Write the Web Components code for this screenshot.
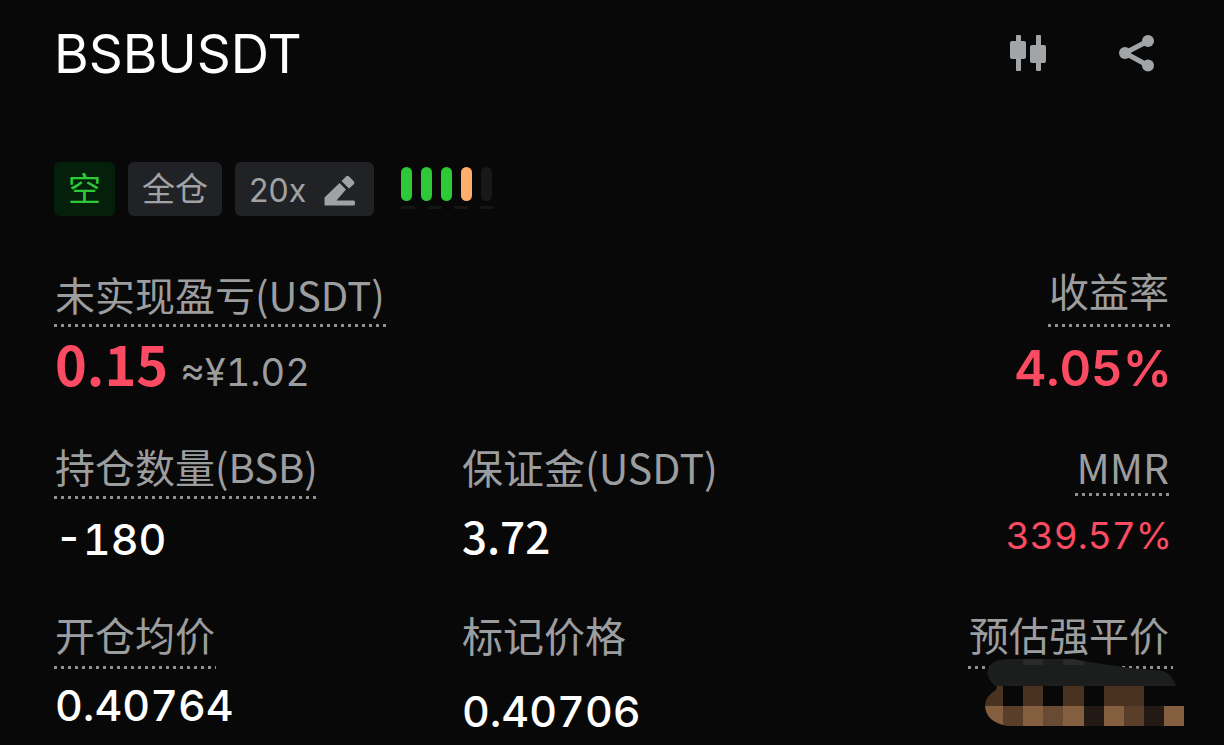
<!DOCTYPE html>
<html lang="zh-CN">
<head>
<meta charset="utf-8">
<title>BSBUSDT</title>
<meta name="viewport" content="width=device-width, initial-scale=1">
<style>
  body {
    margin: 0;
    background: #080808;
    color: #fff;
    font-family: 'Noto Sans CJK SC', 'Noto Sans', sans-serif;
  }
</style>
</head>
<body>
<position-card symbol="BSBUSDT"></position-card>

<script>
(function() {
  function define(name, html, setup) {
    var template = document.createElement('template')
    template.innerHTML = html
    customElements.define(name, class extends HTMLElement {
      constructor() {
        super()
        this.attachShadow({ mode: 'open' })
        this.shadowRoot.appendChild(template.content.cloneNode(true))
      }

      connectedCallback() {
        if (setup) setup(this, this.shadowRoot)
      }
    })
  }

  define('icon-button', `
    <style>
      :host { display: inline-flex; }
      button {
        display: flex;
        padding: 0;
        border: 0;
        background: none;
        color: #a2a5a8;
        cursor: pointer;
      }
    </style>
    <button type="button"><slot></slot></button>
  `, function(host, root) {
    root.querySelector('button').setAttribute('aria-label', host.getAttribute('label'))
  })

  define('position-tag', `
    <style>
      :host {
        display: flex;
        align-items: flex-start;
        box-sizing: border-box;
        height: 54px;
        padding: 0 14px;
        border-radius: 6px;
        background: #202225;
        color: #a0a2a5;
        font-size: 33px;
        line-height: 50px;
      }
      :host([side='short']) {
        background: #04200a;
        color: #2dc937;
      }
    </style>
    <slot></slot>
  `)

  define('leverage-button', `
    <style>
      :host { display: flex; }
      button {
        display: flex;
        align-items: center;
        gap: 18px;
        box-sizing: border-box;
        height: 54px;
        padding: 4px 18px 0 14px;
        border: 0;
        border-radius: 6px;
        background: #202225;
        color: #a0a2a5;
        font: 400 32px/50px Inter, sans-serif;
        cursor: pointer;
      }
      svg { display: block; }
    </style>
    <button type="button">
      <slot></slot>
      <svg width="32" height="32" viewBox="0 0 32 32" fill="currentColor" aria-hidden="true">
        <path d="M15.500 8L22 14.500L12.500 25.500H29.500Q31 25.500 31 27V29Q31 30.500 29.500 30.500H1.500Q.5 30.500 .5 29.500V22.500Z"/>
        <path d="M17.500 6L22 1.500Q23.500 0 25 1.500L29.800 6.300Q31.200 7.700 29.800 9.200L25 13.500Z"/>
      </svg>
    </button>
  `)

  define('risk-meter', `
    <style>
      :host { display: block; }
      .bars, .dashes { display: flex; }
      .bars { gap: 9px; }
      .bars i {
        width: 11px;
        height: 34px;
        border-radius: 6px;
        background: #171818;
      }
      .bars .low { background: #2dc937; }
      .bars .mid { background: #ffaf69; }
      .dashes {
        justify-content: space-between;
        margin: 5px -2px 0 0;
      }
      .dashes i { width: 14px; height: 3px; border-radius: 1px; background: #151515; }
    </style>
    <div class="bars">
      <i class="low"></i><i class="low"></i><i class="low"></i><i class="mid"></i><i></i>
    </div>
    <div class="dashes"><i></i><i></i><i></i><i></i></div>
  `)

  define('stat-item', `
    <style>
      :host {
        display: flex;
        flex-direction: column;
        align-items: flex-start;
      }
      :host([align='end']) { align-items: flex-end; }
      .label {
        box-sizing: border-box;
        height: var(--label-height, 55px);
        padding: 0 1px;
        color: #9c9d9f;
        font-size: var(--label-size, 40px);
        line-height: var(--label-line, 44px);
        white-space: nowrap;
      }
      :host([hint]) .label {
        background: repeating-linear-gradient(90deg, #8f9092 0 3px, transparent 3px 7px) left bottom / 100% 3px no-repeat;
      }
      :host([align='end']) .label { padding-right: 4px; }
      .value {
        display: flex;
        align-items: baseline;
        gap: 12px;
        height: 56px;
        margin-top: var(--value-gap, 12px);
        padding: 0 1px;
        font-family: var(--value-font, Inter, sans-serif);
        font-size: var(--value-size, 43px);
        font-weight: var(--value-weight, 500);
        font-feature-settings: 'tnum';
        line-height: 56px;
        white-space: nowrap;
      }
      :host([tone='loss']) .value { color: #fb4b62; }
    </style>
    <div class="label"></div>
    <div class="value"><slot></slot></div>
  `, function(host, root) {
    root.querySelector('.label').textContent = host.getAttribute('label')
  })

  // liquidation price is masked with a smear and a block mosaic
  define('masked-value', `
    <style>
      :host {
        display: block;
        position: relative;
        width: 182px;
        height: 56px;
      }
      svg {
        position: absolute;
        right: -13px;
        bottom: 7px;
      }
    </style>
    <svg width="200" height="68" viewBox="0 0 200 68" aria-hidden="true">
      <defs>
        <clipPath id="blob"><path d="M12 28L11 32Q0 38 0 48Q1 64 22 68H200V28Z"/></clipPath>
      </defs>
      <path fill="#1c1e1e" d="M10 28Q-1 18 4 9Q8 1 24 1H80Q92 1 104 4L145 10L178 13Q187 16 191 28Z"/>
      <path fill="#292a2b" d="M38 1H58V7H38ZM78 1H86Q92 1 99 4V7H78Z"/>
      <g clip-path="url(#blob)">
        <path fill="#493320" d="M0 28H18V48H0ZM38 28H58V48H38ZM78 28H99V48H78ZM119 28H159V48H119Z"/>
        <path fill="#835e3f" d="M0 48H18V68H0ZM38 48H58V68H38ZM78 48H99V68H78ZM119 48H139V68H119ZM179 48H199V68H179Z"/>
        <path fill="#593e29" d="M18 48H38V68H18ZM139 48H159V68H139Z"/>
        <path fill="#694a32" d="M58 48H78V68H58Z"/>
        <path fill="#241a15" d="M99 48H119V68H99ZM159 48H179V68H159Z"/>
      </g>
    </svg>
  `)

  define('position-card', `
    <style>
      :host {
        display: block;
        padding: 16px 51px 16px 54px;
      }
      header {
        display: flex;
        align-items: center;
        justify-content: space-between;
      }
      h1 {
        margin: 0;
        font: 400 53px/76px Inter, sans-serif;
      }
      nav {
        display: flex;
        align-items: center;
        gap: 68px;
        padding-right: 16px;
      }
      svg { display: block; }
      .tags {
        display: flex;
        gap: 13px;
        margin-top: 70px;
      }
      risk-meter { margin: 5px 0 0 14px; }
      .stats {
        display: grid;
        grid-template-columns: 4fr 4fr 3fr;
        margin-top: 56px;
        row-gap: 47px;
      }
      .wide { grid-column: span 2; }
      .pnl {
        --value-font: 'Noto Sans CJK SC', sans-serif;
        --value-size: 54px;
        --value-weight: 700;
        --value-gap: 8px;
      }
      .rate {
        --label-line: 36px;
        --value-size: 49px;
        --value-weight: 600;
        --value-gap: 14px;
      }
      .margin {
        --label-size: 41px;
        --value-font: 'Noto Sans CJK SC', sans-serif;
        --value-size: 44px;
        --value-gap: 8px;
      }
      .mmr {
        --label-height: 52px;
        --label-size: 41px;
        --value-size: 37px;
        --value-weight: 400;
      }
      .entry { --label-line: 40px; --value-gap: 8px; }
      .mark {
        --label-size: 41px;
        --label-line: 40px;
        --value-gap: 14px;
      }
      .approx {
        color: #9c9d9f;
        font: 400 38px/56px Inter, sans-serif;
        font-feature-settings: 'tnum';
      }
    </style>
    <header>
      <h1></h1>
      <nav>
        <icon-button label="K线">
          <svg width="40" height="40" viewBox="0 0 40 40" fill="currentColor">
            <rect x="7" y="1" width="5" height="36" rx="1"/>
            <rect x="1" y="7" width="16" height="18" rx="2"/>
            <rect x="27" y="1" width="5" height="36" rx="1"/>
            <rect x="21" y="11" width="16" height="18" rx="2"/>
          </svg>
        </icon-button>
        <icon-button label="分享">
          <svg width="40" height="40" viewBox="0 0 40 40" fill="currentColor">
            <path d="M31 7L8 19L31 31.500" fill="none" stroke="currentColor" stroke-width="5"/>
            <circle cx="31" cy="7" r="6"/>
            <circle cx="8" cy="19" r="6"/>
            <circle cx="31" cy="31.500" r="6"/>
          </svg>
        </icon-button>
      </nav>
    </header>
    <div class="tags">
      <position-tag side="short">空</position-tag>
      <position-tag>全仓</position-tag>
      <leverage-button>20x</leverage-button>
      <risk-meter></risk-meter>
    </div>
    <section class="stats">
      <stat-item class="wide pnl" label="未实现盈亏(USDT)" hint tone="loss">0.15<span class="approx">≈¥1.02</span></stat-item>
      <stat-item class="rate" label="收益率" hint tone="loss" align="end">4.05%</stat-item>
      <stat-item label="持仓数量(BSB)" hint>-180</stat-item>
      <stat-item class="margin" label="保证金(USDT)">3.72</stat-item>
      <stat-item class="mmr" label="MMR" hint tone="loss" align="end">339.57%</stat-item>
      <stat-item class="entry" label="开仓均价" hint>0.40764</stat-item>
      <stat-item class="mark" label="标记价格">0.40706</stat-item>
      <stat-item class="entry" label="预估强平价" hint align="end"><masked-value></masked-value></stat-item>
    </section>
  `, function(host, root) {
    root.querySelector('h1').textContent = host.getAttribute('symbol')
  })
})()
</script>
</body>
</html>
